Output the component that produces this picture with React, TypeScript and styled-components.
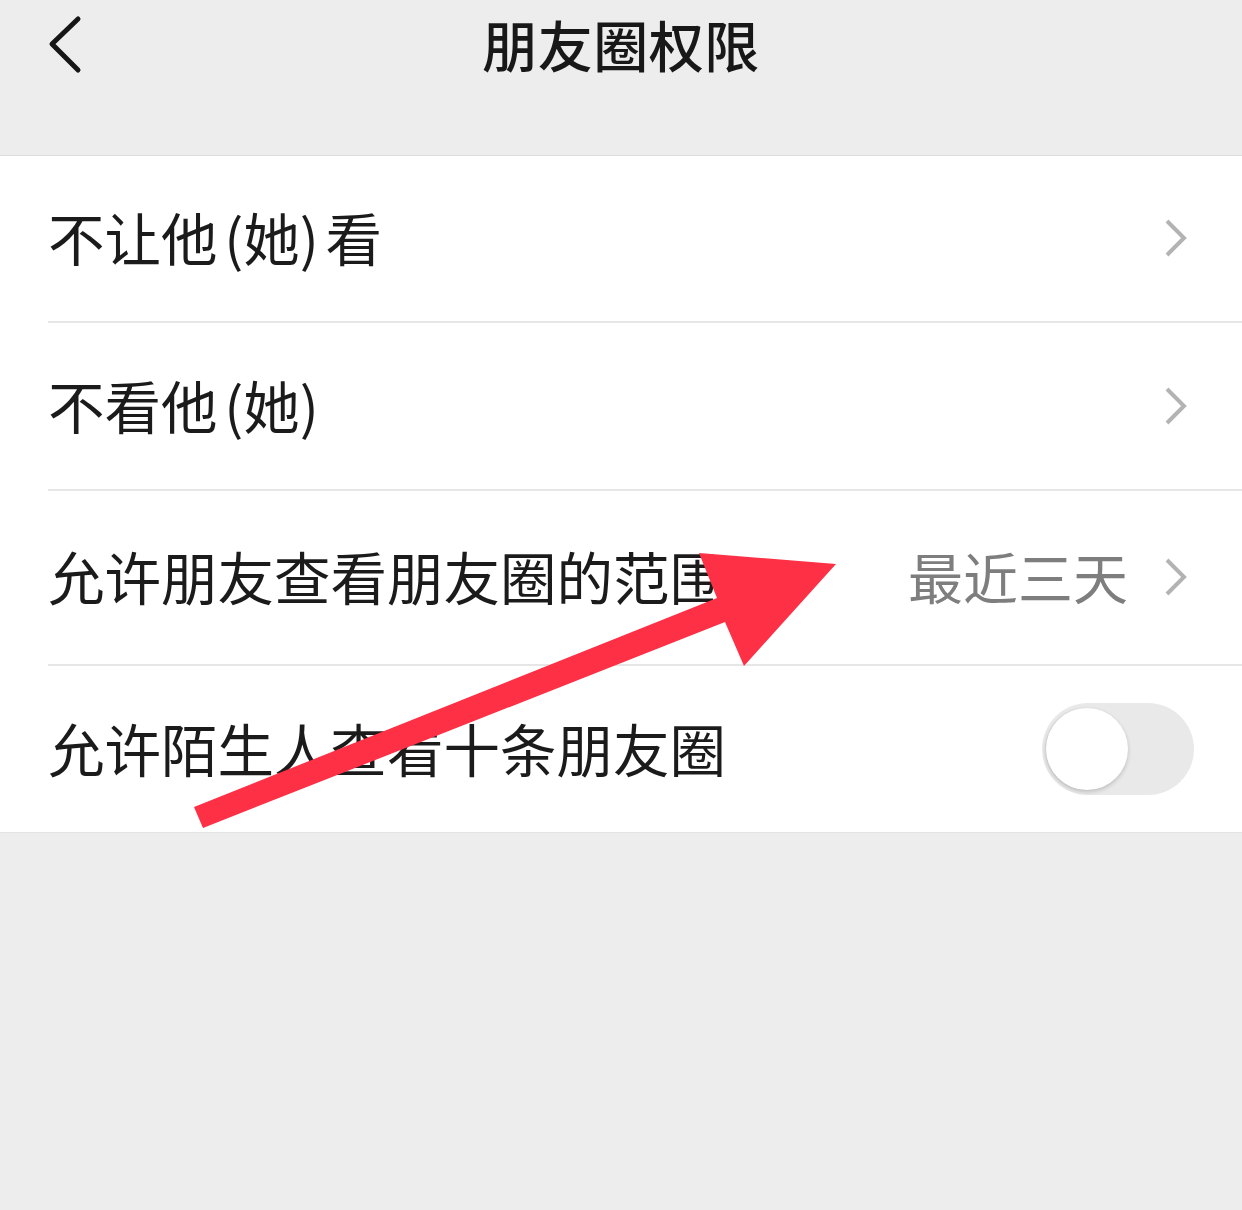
import React, { useState } from 'react';
import styled, { createGlobalStyle } from 'styled-components';

const GlobalStyle = createGlobalStyle`
    html, body {
        margin: 0;
        padding: 0;
        background: #ededed;
        font-family: "Noto Sans CJK SC", "Noto Sans", sans-serif;
    }
`;

const Page = styled.div`
    position: relative;
    width: 1242px;
    height: 1210px;
    background: #ededed;
    overflow: hidden;
`;

const NavBar = styled.div`
    position: relative;
    height: 156px;
    display: flex;
    justify-content: center;
    border-bottom: 1px solid #dedede;
    box-sizing: border-box;
`;

const BackButton = styled.div`
    position: absolute;
    left: 44px;
    top: 14px;
    width: 44px;
    height: 62px;
`;

const Title = styled.h1`
    margin: 0;
    padding-top: 10px;
    font-size: 55px;
    line-height: 66px;
    font-weight: 500;
    color: #181818;
    letter-spacing: 0.5px;
`;

const List = styled.div`
    background: #ffffff;
    border-bottom: 1px solid #e3e3e3;
`;

const Row = styled.div<{ $height: number; $last?: boolean }>`
    height: ${(p) => p.$height}px;
    margin-left: 48px;
    padding: 0 48px 5px 0;
    display: flex;
    align-items: center;
    box-sizing: border-box;
    border-bottom: ${(p) => (p.$last ? 'none' : '2px solid #e6e6e6')};
`;

const Label = styled.div`
    flex: 1;
    font-size: 56.5px;
    line-height: 66px;
    color: #1b1b1b;
    white-space: nowrap;
    word-spacing: -6px;
`;

const Value = styled.div`
    font-size: 55px;
    line-height: 66px;
    color: #7e7e7e;
    margin-right: 36px;
`;

const Chevron = styled.svg`
    width: 24px;
    height: 40px;
    margin: 4px 6px 0 0;
`;

const Switch = styled.div<{ $on: boolean }>`
    width: 152px;
    height: 92px;
    margin-top: 4px;
    border-radius: 46px;
    background: ${(p) => (p.$on ? '#07c160' : '#e9e9ea')};
    display: flex;
    align-items: center;
    padding: 0 4px;
    box-sizing: border-box;
    cursor: pointer;
`;

const Knob = styled.div`
    width: 82px;
    height: 82px;
    border-radius: 50%;
    background: #ffffff;
    box-shadow: 0 2px 4px rgba(0, 0, 0, 0.18), -1px 0 2px rgba(0, 0, 0, 0.06);
`;

const Arrow = styled.svg`
    position: absolute;
    left: 0;
    top: 0;
    width: 1242px;
    height: 1210px;
    pointer-events: none;
`;

const RightChevron = () => (
    <Chevron viewBox="0 0 24 40">
        <path d="M3 3 L20 20 L3 37" fill="none" stroke="#b3b3b3" strokeWidth="4" />
    </Chevron>
);

const rows = [
    { label: '不让他 (她) 看', height: 167 },
    { label: '不看他 (她)', height: 168 },
    { label: '允许朋友查看朋友圈的范围', value: '最近三天', height: 175 },
];

const App = (): React.ReactElement => {
    const [strangers, setStrangers] = useState(false);

    return (
        <Page>
            <GlobalStyle />
            <NavBar>
                <BackButton>
                    <svg width="44" height="62" viewBox="0 0 44 62">
                        <path d="M34 5 L8 30 L34 56" fill="none" stroke="#161616" strokeWidth="5" strokeLinecap="round" strokeLinejoin="round" />
                    </svg>
                </BackButton>
                <Title>朋友圈权限</Title>
            </NavBar>
            <List>
                {rows.map((r) => (
                    <Row key={r.label} $height={r.height}>
                        <Label>{r.label}</Label>
                        {r.value && <Value>{r.value}</Value>}
                        <RightChevron />
                    </Row>
                ))}
                <Row $height={166} $last>
                    <Label>允许陌生人查看十条朋友圈</Label>
                    <Switch $on={strangers} onClick={() => setStrangers(!strangers)}>
                        <Knob />
                    </Switch>
                </Row>
            </List>
            <Arrow viewBox="0 0 1242 1210">
                {/* white backing behind the arrow head */}
                <polygon points="713,550 760,550 760,600 713,600" fill="#ffffff" />
                <polygon
                    points="194,807 717,598 699,553 836,564 744,666 725,622 203,828"
                    fill="#fd3045"
                />
            </Arrow>
        </Page>
    );
};

export default App;
